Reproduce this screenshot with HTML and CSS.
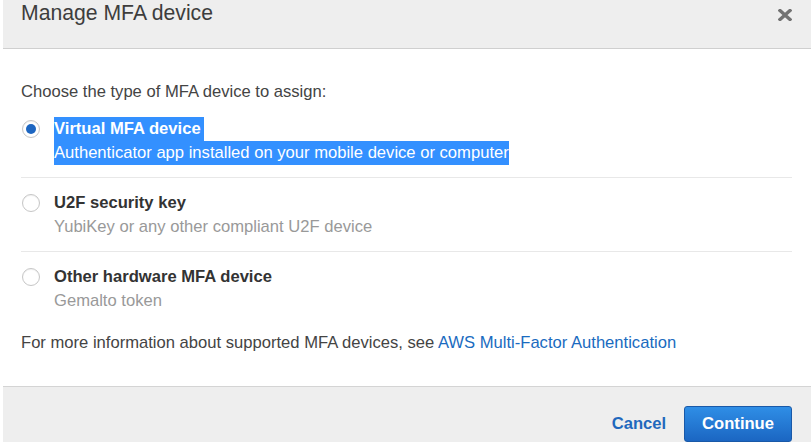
FILE: index.html
```html
<!DOCTYPE html>
<html lang="en">
<head>
<meta charset="utf-8">
<title>Manage MFA device</title>
<link rel="stylesheet" href="styles.css">
</head>
<body>
<div class="dialog">
  <header class="dlg-header">
    <h1 class="dlg-title">Manage MFA device</h1>
    <button class="dlg-close" aria-label="Close">
      <svg width="14" height="12" viewBox="0 0 14 12" aria-hidden="true">
        <path d="M2 1.5 L12 10.5 M12 1.5 L2 10.5" stroke="#727272" stroke-width="3.4" stroke-linecap="square" fill="none"/>
      </svg>
    </button>
  </header>
  <section class="dlg-body">
    <p class="intro">Choose the type of MFA device to assign:</p>
    <ul class="options">
      <li class="option">
        <span class="radio radio-checked"></span>
        <div class="option-text">
          <div class="opt-label sel sel-first">Virtual MFA device</div>
          <div class="opt-desc sel">Authenticator app installed on your mobile device or computer</div>
        </div>
      </li>
      <li class="option">
        <span class="radio"></span>
        <div class="option-text">
          <div class="opt-label">U2F security key</div>
          <div class="opt-desc">YubiKey or any other compliant U2F device</div>
        </div>
      </li>
      <li class="option">
        <span class="radio"></span>
        <div class="option-text">
          <div class="opt-label">Other hardware MFA device</div>
          <div class="opt-desc">Gemalto token</div>
        </div>
      </li>
    </ul>
    <p class="more">For more information about supported MFA devices, see <a class="link" href="#">AWS Multi-Factor Authentication</a></p>
  </section>
  <footer class="dlg-footer">
    <button class="btn-link">Cancel</button>
    <button class="btn-primary">Continue</button>
  </footer>
</div>
</body>
</html>
```

FILE: styles.css
```css
html, body {
  margin: 0;
  padding: 0;
  background: #ffffff;
  overflow: hidden;
}

body {
  font-family: "Liberation Sans", Arial, sans-serif;
  font-size: 16.6px;
  color: #444444;
}

.dialog {
  margin-left: 3px;
  width: 808px;
  background: #ffffff;
}

.dlg-header {
  display: flex;
  justify-content: space-between;
  align-items: flex-start;
  box-sizing: border-box;
  height: 49px;
  padding: 1px 19px 0 18px;
  background: #eeeeee;
  border-bottom: 1px solid #cfcfcf;
}

.dlg-title {
  margin: 0;
  font-size: 21.2px;
  font-weight: normal;
  line-height: 24px;
  color: #3d3d3d;
}

.dlg-close {
  margin: 8px 0 0 0;
  padding: 0;
  border: 0;
  background: none;
  width: 14px;
  height: 12px;
  display: block;
  cursor: pointer;
}

.dlg-close svg {
  display: block;
}

.dlg-body {
  padding: 31px 19px 31px 18px;
}

.intro {
  margin: 0;
  line-height: 24px;
  color: #444444;
}

.options {
  list-style: none;
  margin: 0;
  padding: 0;
}

.option {
  display: flex;
  align-items: flex-start;
  gap: 14px;
  padding: 13px 0 12px 1px;
  border-bottom: 1px solid #e8e8e8;
}

.option:last-child {
  border-bottom: 0;
}

.radio {
  flex: none;
  width: 18px;
  height: 18px;
  margin-top: 3px;
  box-sizing: border-box;
  border: 1px solid #c6c6c6;
  border-radius: 50%;
  background: #ffffff;
  box-shadow: inset 0 1px 1px rgba(0, 0, 0, 0.06);
  position: relative;
}

.radio-checked::after {
  content: "";
  position: absolute;
  left: 3px;
  top: 3px;
  width: 10px;
  height: 10px;
  border-radius: 50%;
  background: #1d66c1;
}

.option-text {
  line-height: 24px;
}

.opt-label {
  font-weight: bold;
  color: #333333;
}

.opt-desc {
  color: #999999;
}

.sel {
  width: fit-content;
  background: #3390ff;
  color: #ffffff;
}

.sel-first {
  padding-right: 3px;
}

.more {
  margin: 6px 0 0 0;
  line-height: 24px;
  color: #444444;
}

.link {
  color: #1a6bc0;
  text-decoration: none;
}

.dlg-footer {
  display: flex;
  justify-content: flex-end;
  align-items: center;
  gap: 18px;
  padding: 19px 19px 19px 18px;
  background: #eeeeee;
  border-top: 1px solid #d4d4d4;
}

.btn-link {
  border: 0;
  background: none;
  padding: 0;
  font-family: inherit;
  font-size: 16.6px;
  font-weight: bold;
  color: #1f68bd;
  cursor: pointer;
}

.btn-primary {
  height: 36px;
  padding: 0 17px;
  border: 1px solid #1959a8;
  border-radius: 3px;
  background: linear-gradient(#2f8ee6, #1b66c2);
  font-family: inherit;
  font-size: 16.6px;
  font-weight: bold;
  color: #ffffff;
  cursor: pointer;
}
```
